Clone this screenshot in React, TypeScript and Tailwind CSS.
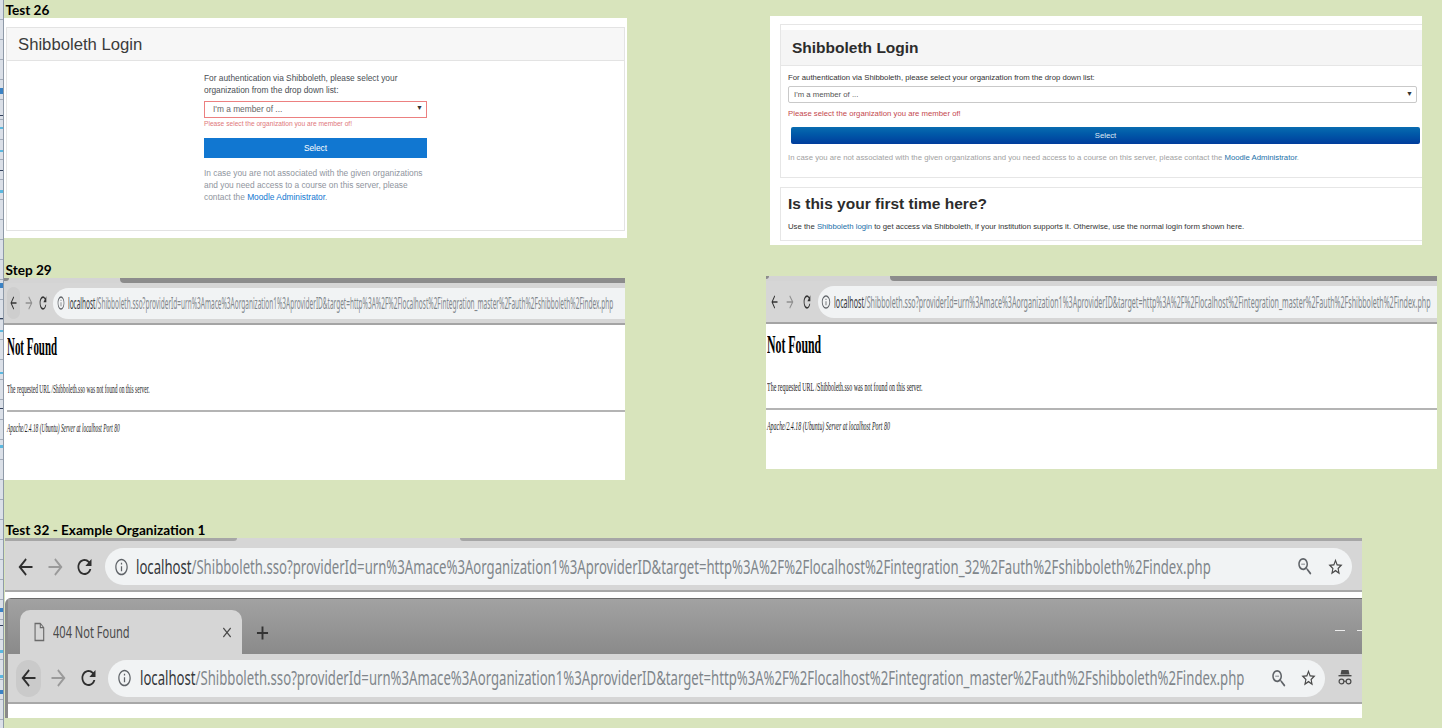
import React from "react";

const P = {
  back: "M20 11H7.83l5.59-5.59L12 4l-8 8 8 8 1.41-1.41L7.83 13H20v-2z",
  fwd: "M4 11h12.17l-5.59-5.59L12 4l8 8-8 8-1.41-1.41L16.17 13H4v-2z",
  reload: "M17.65 6.35A7.958 7.958 0 0 0 12 4c-4.42 0-7.99 3.58-7.99 8s3.57 8 7.99 8c3.73 0 6.84-2.55 7.73-6h-2.08A5.99 5.99 0 0 1 12 18c-3.31 0-6-2.69-6-6s2.69-6 6-6c1.66 0 3.14.69 4.22 1.78L13 11h7V4l-2.35 2.35z",
  info: "M11 7h2v2h-2zm0 4h2v6h-2zm1-9C6.48 2 2 6.48 2 12s4.48 10 10 10 10-4.48 10-10S17.52 2 12 2zm0 18c-4.41 0-8-3.59-8-8s3.59-8 8-8 8 3.59 8 8-3.59 8-8 8z",
  star: "M22 9.24l-7.19-.62L12 2 9.19 8.63 2 9.24l5.46 4.73L5.82 21 12 17.27 18.18 21l-1.63-7.03L22 9.24zM12 15.4l-3.76 2.27 1-4.28-3.32-2.88 4.38-.38L12 6.1l1.71 4.04 4.38.38-3.32 2.88 1 4.28L12 15.4z",
  zoom: "M15.5 14h-.79l-.28-.27C15.41 12.59 16 11.11 16 9.5 16 5.91 13.09 3 9.5 3S3 5.91 3 9.5 5.91 16 9.5 16c1.61 0 3.09-.59 4.23-1.57l.27.28v.79l5 4.99L20.49 19l-4.99-5zm-6 0C7.01 14 5 11.99 5 9.5S7.01 5 9.5 5 14 7.01 14 9.5 11.99 14 9.5 14zM7 9h5v1H7z",
  file: "M6 2h8l5 5v15H6V2zm1.5 1.5v17h10V8H13V3.5H7.5zm7 .6V6.5h2.4L14.5 4.1z",
  close: "M19 6.41L17.59 5 12 10.59 6.41 5 5 6.41 10.59 12 5 17.59 6.41 19 12 13.41 17.59 19 19 17.59 13.41 12z",
  plus: "M19 13.2h-5.8V19h-2.4v-5.8H5v-2.4h5.8V5h2.4v5.8H19z",
};

function Ic({ d, w, h, c, cls = "" }: { d: string; w: number; h: number; c: string; cls?: string }) {
  return (
    <svg width={w} height={h} viewBox="0 0 24 24" preserveAspectRatio="none" fill={c} className={"block shrink-0 " + cls}>
      <path d={d} />
    </svg>
  );
}

const URL_A = "/Shibboleth.sso?providerId=urn%3Amace%3Aorganization1%3AproviderID&target=http%3A%2F%2Flocalhost%2Fintegration_master%2Fauth%2Fshibboleth%2Findex.php";
const URL_B = "/Shibboleth.sso?providerId=urn%3Amace%3Aorganization1%3AproviderID&target=http%3A%2F%2Flocalhost%2Fintegration_32%2Fauth%2Fshibboleth%2Findex.php";

function Url({ rest, cls }: { rest: string; cls: string }) {
  return (
    <span className={"inline-block whitespace-nowrap origin-left font-['Noto_Sans',sans-serif] text-[#80868b] " + cls}>
      <span className="text-[#35383b]">localhost</span>
      {rest}
    </span>
  );
}

function NotFound({ mt, pl, rule, sh1, sp, sf }: { mt: string; pl: string; rule: string; sh1: string; sp: string; sf: string }) {
  return (
    <div className={"font-['Liberation_Serif',serif] text-black " + mt}>
      <div className={"h-[30px] text-[26px] font-bold leading-[30px] whitespace-nowrap " + pl}>
        <span className={"inline-block origin-left " + sh1}>Not Found</span>
      </div>
      <div className={"mt-[19px] h-[16px] text-[13px] leading-[16px] whitespace-nowrap text-[#222] " + pl}>
        <span className={"inline-block origin-left " + sp}>The requested URL /Shibboleth.sso was not found on this server.</span>
      </div>
      <div className={"mt-[13px] h-[2px] bg-[#b4b4b4] " + rule} />
      <div className={"mt-[8px] h-[16px] text-[13px] leading-[16px] italic whitespace-nowrap text-[#222] " + pl}>
        <span className={"inline-block origin-left " + sf}>Apache/2.4.18 (Ubuntu) Server at localhost Port 80</span>
      </div>
    </div>
  );
}

function Label({ children }: { children: React.ReactNode }) {
  return <div className="h-[18px] pl-[1.5px] pt-[0.5px] font-['Lato',sans-serif] text-[13.6px] font-bold leading-[18px] text-black whitespace-nowrap">{children}</div>;
}

function Incognito() {
  return (
    <svg width="14" height="18" viewBox="0 0 14 18" fill="#4a4a4a" className="block shrink-0">
      <path d="M3.5 1h7l1 4.5h-9z" />
      <rect x="0.5" y="6" width="13" height="1.4" />
      <circle cx="3.5" cy="12.5" r="2.4" fill="none" stroke="#4a4a4a" strokeWidth="1.2" />
      <circle cx="10.5" cy="12.5" r="2.4" fill="none" stroke="#4a4a4a" strokeWidth="1.2" />
      <rect x="5.6" y="11.8" width="2.8" height="1" />
    </svg>
  );
}

const ticks = [
  [88, "#3b82c4", 6], [115, "#33415c", 1], [127, "#5bb8e0", 2], [150, "#5bb8e0", 2], [170, "#33415c", 1], [190, "#5bb8e0", 3],
  [283, "#3b82c4", 5], [318, "#33415c", 1], [330, "#5bb8e0", 2], [372, "#5bb8e0", 2], [408, "#33415c", 1], [445, "#5bb8e0", 3],
  [608, "#3b82c4", 4], [625, "#33415c", 1], [650, "#5bb8e0", 3], [675, "#5bb8e0", 3], [690, "#3b82c4", 4],
];

export default function App() {
  return (
    <div className="relative flex h-[728px] w-[1442px] overflow-hidden bg-[#d8e4bc]">
      <div className="relative h-full w-[4px] shrink-0 border-r border-[#8f9aa8] bg-[image:repeating-linear-gradient(to_bottom,#dbe0e8_0px,#dbe0e8_19px,#a3abb8_19px,#a3abb8_20px)]">
        {ticks.map(([t, c, h], i) => (
          <div key={i} className="absolute left-0 w-[3px]" style={{ top: t as number, background: c as string, height: h as number }} />
        ))}
      </div>
      <div className="flex flex-1 flex-col">
        {/* Row 1 */}
        <div className="flex h-[260px] shrink-0">
          <div className="w-[623px] shrink-0">
            <Label>Test 26</Label>
            <div className="h-[220px] bg-white px-[2px] pt-[9px] pb-[7px] font-['Liberation_Sans',sans-serif]">
              <div className="h-full border border-[#e3e3e3]">
                <div className="flex h-[33px] items-center border-b border-[#e3e3e3] bg-[#f7f7f7] pl-[11px] pt-[1px] text-[16.7px] text-[#3b3b3b]">Shibboleth Login</div>
                <div className="ml-[197px] w-[223px] pt-[11px] text-[8.35px]">
                  <p className="h-[24px] leading-[12px] text-[#4a4f55] whitespace-nowrap">For authentication via Shibboleth, please select your<br />organization from the drop down list:</p>
                  <div className="relative mt-[5px] flex h-[17px] items-center border border-[#ec8080] pl-[8px] text-[#666]">
                    I'm a member of ...
                    <span className="absolute right-[3px] top-[1px] text-[7px] text-[#333]">▼</span>
                  </div>
                  <p className="h-[12px] text-[6.65px] leading-[12px] text-[#e0777a] whitespace-nowrap">Please select the organization you are member of!</p>
                  <div className="mt-[8px] flex h-[20px] items-center justify-center bg-[#1177d1] text-white">Select</div>
                  <p className="mt-[9px] leading-[12px] text-[#8f959e] whitespace-nowrap">In case you are not associated with the given organizations<br />and you need access to a course on this server, please<br />contact the <span className="text-[#1177d1]">Moodle Administrator</span>.</p>
                </div>
              </div>
            </div>
          </div>
          <div className="ml-[143px] mt-[16px] h-[229px] w-[652px] shrink-0 bg-white pl-[10px] pt-[8px] font-['Liberation_Sans',sans-serif]">
            <div className="h-[154px] border-y border-l border-[#e6e6e6]">
              <div className="mt-[5px] flex h-[36px] items-center border-b border-[#e6e6e6] bg-[#f5f5f5] pl-[11px] text-[15.5px] font-bold text-[#2c2c2c]">Shibboleth Login</div>
              <div className="pl-[7px] pr-[5px] text-[7.75px]">
                <p className="mt-[6px] h-[11px] leading-[11px] text-[#333]">For authentication via Shibboleth, please select your organization from the drop down list:</p>
                <div className="relative mt-[3px] flex h-[17px] items-center rounded-[2px] border border-[#c9c9c9] pl-[5px] text-[#555]">
                  I'm a member of ...
                  <span className="absolute right-[3px] top-[2px] text-[7px] text-[#333]">▼</span>
                </div>
                <p className="mt-[5px] h-[11px] leading-[11px] text-[#c4484e]">Please select the organization you are member of!</p>
                <div className="mt-[8px] ml-[3px] mr-[-3px] flex h-[17px] items-center justify-center rounded-[2px] bg-gradient-to-b from-[#0a6cb0] to-[#003c9c] text-[#dfe9f5]">Select</div>
                <p className="mt-[8px] h-[11px] leading-[11px] text-[#a2a2a2] whitespace-nowrap">In case you are not associated with the given organizations and you need access to a course on this server, please contact the <span className="text-[#1a6fa8]">Moodle Administrator</span>.</p>
              </div>
            </div>
            <div className="mt-[9px] h-[54px] border-y border-l border-[#e6e6e6] pl-[7px]">
              <div className="mt-[7px] h-[18px] text-[15.5px] font-bold leading-[18px] text-[#2c2c2c]">Is this your first time here?</div>
              <p className="mt-[8px] text-[7.75px] leading-[11px] text-[#333] whitespace-nowrap">Use the <span className="text-[#1a6fa8]">Shibboleth login</span> to get access via Shibboleth, if your institution supports it. Otherwise, use the normal login form shown here.</p>
            </div>
          </div>
        </div>

        {/* Row 2 */}
        <div className="flex h-[260px] shrink-0">
          <div className="w-[621px] shrink-0">
            <Label>Step 29</Label>
            <div className="h-[202px] overflow-hidden bg-white">
              <div className="flex h-[5px] bg-[#d4d4d4]">
                <div className="h-[3px] w-[5px] rounded-br-[3px] bg-[#8c8c8c]" />
                <div className="w-[111px]" />
                <div className="flex-1 rounded-bl-[4px] bg-[#8c8c8c]" />
              </div>
              <div className="flex h-[42px] items-center border-b-2 border-[#a4a4a4] bg-[#d6d6d6]">
                <div className="ml-[3px] flex h-[32px] w-[13px] shrink-0 items-center justify-center rounded-full bg-[#cecece]">
                  <Ic d={P.back} w={9} h={20} c="#333" />
                </div>
                <Ic d={P.fwd} w={10} h={20} c="#909090" cls="ml-[3.5px]" />
                <Ic d={P.reload} w={10} h={20} c="#333" cls="ml-[4px]" />
                <div className="ml-[5.5px] flex h-[31px] min-w-0 flex-1 items-center rounded-l-full bg-[#f1f3f4]">
                  <Ic d={P.info} w={8} h={16} c="#5f6368" cls="ml-[3.5px]" />
                  <div className="ml-[3.5px] min-w-0 flex-1">
                    <Url rest={URL_A} cls="text-[17px] leading-[22px] scale-x-[0.382]" />
                  </div>
                </div>
              </div>
              <NotFound mt="mt-[7px]" pl="pl-[3px]" rule="ml-[3px]" sh1="scale-x-[0.42]" sp="scale-x-[0.422]" sf="scale-x-[0.417]" />
            </div>
          </div>
          <div className="ml-[141px] mt-[16px] h-[193px] w-[671px] shrink-0 overflow-hidden bg-white">
            <div className="flex h-[5px] bg-[#d4d4d4]">
              <div className="h-[3px] w-[3px] rounded-br-[3px] bg-[#8c8c8c]" />
              <div className="w-[121px]" />
              <div className="flex-1 rounded-bl-[4px] bg-[#8c8c8c]" />
            </div>
            <div className="flex h-[43px] items-center border-b-2 border-[#a4a4a4] bg-[#d6d6d6]">
              <Ic d={P.back} w={9} h={20} c="#333" cls="ml-[3.5px]" />
              <Ic d={P.fwd} w={10} h={20} c="#909090" cls="ml-[6.5px]" />
              <Ic d={P.reload} w={10} h={20} c="#333" cls="ml-[6.5px]" />
              <div className="ml-[6.5px] flex h-[32px] min-w-0 flex-1 items-center rounded-l-full bg-[#f1f3f4]">
                <Ic d={P.info} w={10} h={16} c="#5f6368" cls="ml-[3px]" />
                <div className="ml-[3px] min-w-0 flex-1">
                  <Url rest={URL_A} cls="text-[17px] leading-[22px] scale-x-[0.418]" />
                </div>
              </div>
            </div>
            <NotFound mt="mt-[6px]" pl="pl-[1px]" rule="ml-0" sh1="scale-x-[0.454]" sp="scale-x-[0.46]" sf="scale-x-[0.455]" />
          </div>
        </div>

        {/* Row 3 */}
        <div className="shrink-0">
          <Label>Test 32 - Example Organization 1</Label>
          <div className="ml-[1px] h-[180px] w-[1357px] overflow-hidden bg-white">
            <div className="flex h-[3px] bg-[#d6d6d6]">
              <div className="w-[232px] rounded-br-[3px] bg-[#a6a6a6]" />
              <div className="w-[223px]" />
              <div className="flex-1 rounded-bl-[3px] bg-[#a6a6a6]" />
            </div>
            <div className="flex h-[51px] items-center border-b-2 border-[#a8a8a8] bg-[#d6d6d6] pt-[2px]">
              <Ic d={P.back} w={21} h={26} c="#2f2f2f" cls="ml-[9.5px]" />
              <Ic d={P.fwd} w={21} h={26} c="#9a9a9a" cls="ml-[9px]" />
              <Ic d={P.reload} w={21} h={24} c="#2f2f2f" cls="ml-[8px]" />
              <div className="ml-[10.5px] flex h-[37px] w-[1247px] items-center rounded-full bg-[#f1f3f4]">
                <Ic d={P.info} w={15} h={20} c="#5f6368" cls="ml-[8.5px]" />
                <div className="ml-[7.5px] min-w-0 flex-1">
                  <Url rest={URL_B} cls="text-[20px] leading-[26px] scale-x-[0.657]" />
                </div>
                <Ic d={P.zoom} w={18} h={23} c="#5f6368" />
                <Ic d={P.star} w={17} h={20} c="#4a4a4a" cls="ml-[12.5px] mr-[8.5px]" />
              </div>
            </div>
            <div className="h-[6px] bg-white" />
            <div className="h-[120px] rounded-tl-[6px] border-t border-l-[3px] border-[#6b6b6b] border-l-[#8a8a8a]">
              <div className="flex h-[55px] items-end bg-gradient-to-b from-[#a2a2a2] to-[#8a8a8a] pl-[12px]">
                <div className="flex h-[44px] w-[222px] shrink-0 items-center rounded-t-[10px] bg-[#d6d6d6] pl-[10px] font-['Noto_Sans',sans-serif]">
                  <Ic d={P.file} w={18} h={22} c="#6a6a6a" />
                  <span className="ml-[5px] inline-block origin-left scale-x-[0.69] whitespace-nowrap text-[16px] text-[#4a4a4a]">404 Not Found</span>
                  <Ic d={P.close} w={14} h={17} c="#4a4a4a" cls="ml-auto mr-[8px]" />
                </div>
                <Ic d={P.plus} w={19} h={22} c="#333" cls="mb-[10.5px] ml-[10.5px]" />
                <div className="mb-[23px] ml-[1063.5px] h-[1.5px] w-[10px] shrink-0 bg-[#ececec]" />
                <div className="mb-[23px] ml-[12px] h-[1.5px] w-[5px] shrink-0 bg-[#ececec]" />
              </div>
              <div className="flex h-[50px] items-center border-b-2 border-[#a8a8a8] bg-[#d6d6d6]">
                <div className="ml-[8px] flex h-[37px] w-[25px] shrink-0 items-center justify-center rounded-full bg-[#cacaca]">
                  <Ic d={P.back} w={21} h={26} c="#2f2f2f" />
                </div>
                <Ic d={P.fwd} w={21} h={26} c="#9a9a9a" cls="ml-[6.5px]" />
                <Ic d={P.reload} w={21} h={24} c="#2f2f2f" cls="ml-[9px]" />
                <div className="ml-[9.5px] flex h-[37px] w-[1217px] shrink-0 items-center rounded-full bg-[#f1f3f4]">
                  <Ic d={P.info} w={15} h={20} c="#5f6368" cls="ml-[8.5px]" />
                  <div className="ml-[8.5px] min-w-0 flex-1">
                    <Url rest={URL_A} cls="text-[20px] leading-[26px] scale-x-[0.6577]" />
                  </div>
                  <Ic d={P.zoom} w={18} h={23} c="#5f6368" />
                  <Ic d={P.star} w={17} h={20} c="#4a4a4a" cls="ml-[11.5px] mr-[8.5px]" />
                </div>
                <div className="ml-[13px]"><Incognito /></div>
              </div>
              <div className="h-[14px] bg-white" />
            </div>
          </div>
        </div>
      </div>
    </div>
  );
}
